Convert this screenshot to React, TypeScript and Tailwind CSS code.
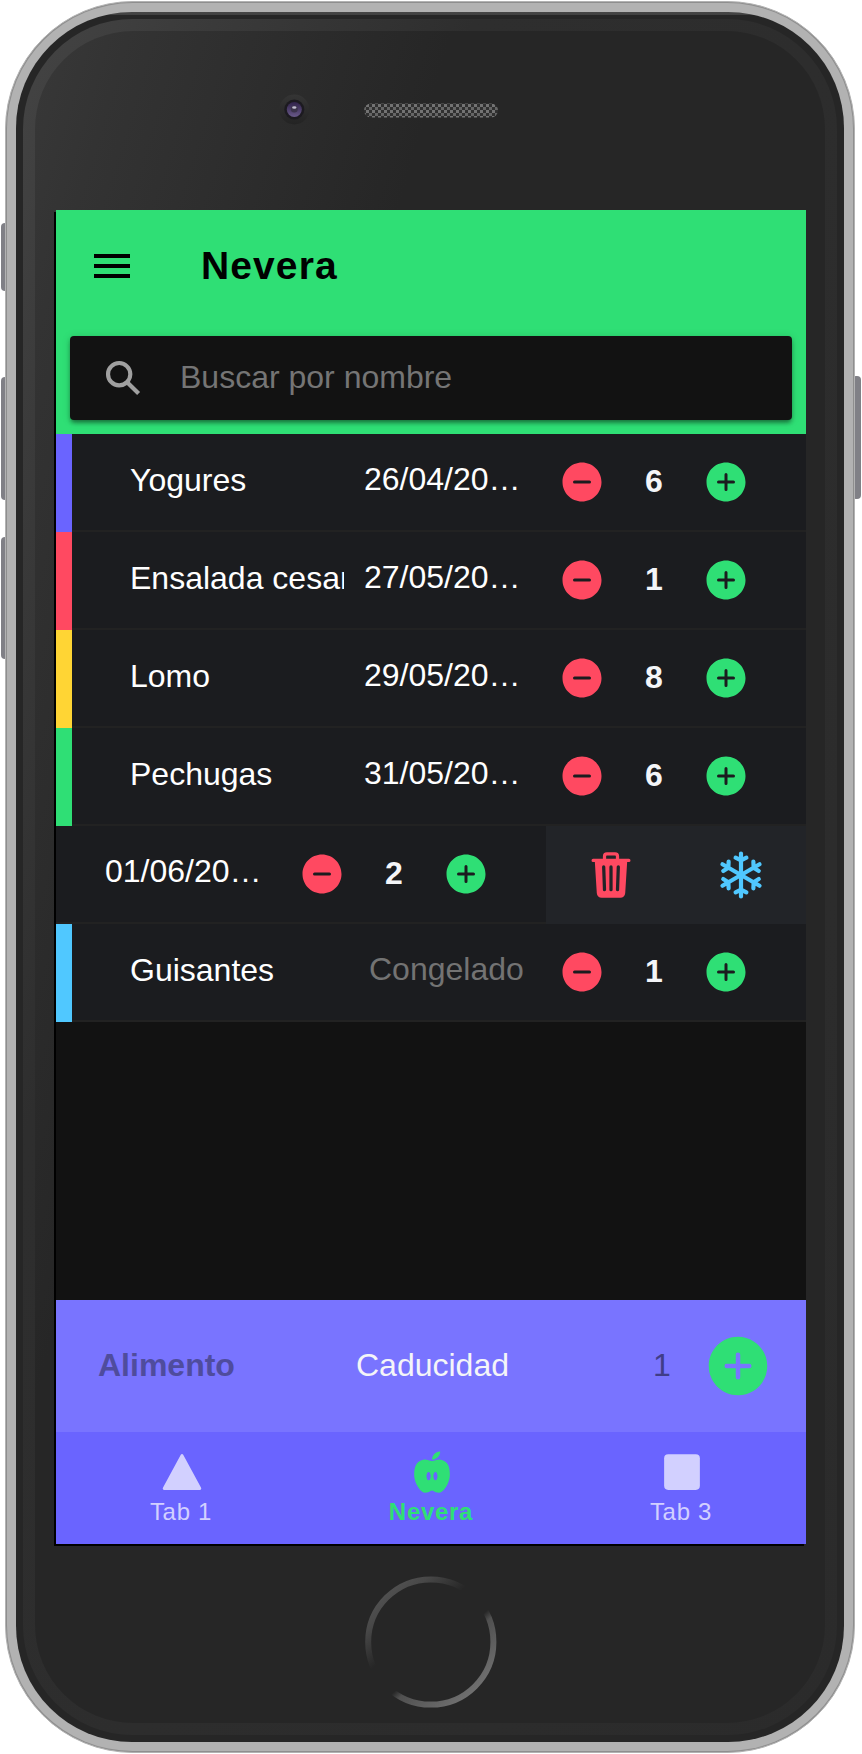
import React from "react";
import { MdMenu } from "react-icons/md";
import {
  IoAddCircle,
  IoNutrition,
  IoRemoveCircle,
  IoSearchSharp,
  IoSquare,
  IoTrash,
  IoTriangle,
} from "react-icons/io5";

type Food = { name: string; date: string; count: number; bar: string; frozen?: boolean; open?: boolean };

const foods: Food[] = [
  { name: "Yogures", date: "26/04/20…", count: 6, bar: "bg-[#6a64ff]" },
  { name: "Ensalada cesar", date: "27/05/20…", count: 1, bar: "bg-[#ff4961]" },
  { name: "Lomo", date: "29/05/20…", count: 8, bar: "bg-[#ffd534]" },
  { name: "Pechugas", date: "31/05/20…", count: 6, bar: "bg-[#2fdf75]" },
  { name: "", date: "01/06/20…", count: 2, bar: "", open: true },
  { name: "Guisantes", date: "Congelado", count: 1, bar: "bg-[#50c8ff]", frozen: true },
];

const spokes = [0, 60, 120, 180, 240, 300];

function Snowflake() {
  return (
    <svg
      className="size-[52px] text-[#50c8ff]"
      viewBox="-26 -26 52 52"
      fill="none"
      stroke="currentColor"
      strokeWidth="4.2"
      strokeLinecap="round"
      strokeLinejoin="round"
    >
      {spokes.map((a) => (
        <path key={a} transform={`rotate(${a})`} d="M0 0V-21.4M-5.4 -17.4L0 -14.6L5.4 -17.4" />
      ))}
    </svg>
  );
}

function Counter({ count }: { count: number }) {
  return (
    <div className="flex h-[96px] w-[192px] shrink-0 items-center justify-between">
      <IoRemoveCircle className="size-[48px] text-[#ff4961]" />
      <span className="pb-[2px] text-[32px] font-bold text-[#f4f5f8]">{count}</span>
      <IoAddCircle className="size-[48px] text-[#2fdf75]" />
    </div>
  );
}

function Row({ food }: { food: Food }) {
  if (food.open) {
    return (
      <li className="flex h-[98px] bg-[#222428]">
        <div className="flex w-[490px] border-b-2 border-[#222222] bg-[#1b1c1f] pl-[49px]">
          <span className="w-[193px] pt-[26px] text-[32px] leading-[38px]">{food.date}</span>
          <Counter count={food.count} />
        </div>
        <div className="flex flex-1 items-center">
          <span className="flex w-[130px] justify-center">
            <IoTrash className="size-[52px] text-[#ff4961]" />
          </span>
          <span className="flex w-[130px] justify-center">
            <Snowflake />
          </span>
        </div>
      </li>
    );
  }
  return (
    <li className="flex h-[98px] bg-[#1b1c1f]">
      <span className={`w-[16px] ${food.bar}`} />
      <div className="flex flex-1 border-b-2 border-[#222222] pl-[58px]">
        <span className="mr-[20px] w-[214px] overflow-hidden pt-[27px] text-[32px] leading-[38px] whitespace-nowrap">
          {food.name}
        </span>
        <span
          className={`w-[194px] pt-[26px] text-[32px] leading-[38px] ${food.frozen ? "pl-[5px] text-[#737373]" : ""}`}
        >
          {food.date}
        </span>
        <Counter count={food.count} />
      </div>
    </li>
  );
}

function Phone({ children }: { children: React.ReactNode }) {
  return (
    <div className="relative h-[1754px] w-[862px] overflow-hidden bg-white font-['Liberation_Sans',Arial,sans-serif]">
      <i className="absolute top-[223px] left-px h-[68px] w-[8px] rounded-[4px] bg-[#808086]" />
      <i className="absolute top-[377px] left-px h-[123px] w-[8px] rounded-[4px] bg-[#808086]" />
      <i className="absolute top-[537px] left-px h-[122px] w-[8px] rounded-[4px] bg-[#808086]" />
      <i className="absolute top-[376px] left-[852px] h-[123px] w-[9px] rounded-[4px] bg-[#808086]" />
      <div className="relative ml-[5px] h-[1754px] w-[850px] pt-px">
        <div className="h-[1752px] rounded-[128px] border border-[#b2b2b2] bg-[#8e8e8e] p-px">
          <div className="h-full rounded-[126px] bg-[#b2b2b2] px-[9px] pt-[9px] pb-[9px]">
            <div className="h-full rounded-[116px] bg-[linear-gradient(to_bottom,#474747_0px,#404040_3px,#262626_3px)] px-[7px] pt-[7px] pb-[7px]">
              <div className="h-full rounded-[110px] bg-[linear-gradient(112deg,#444444_0%,#3c3c3c_10%,#2e2e2e_30%,#2b2b2b_100%)] p-[12px]">
                <div className="h-full rounded-[98px] bg-[linear-gradient(107deg,#383838_0px,#333333_90px,#262626_400px)] pt-[179px] pl-[21px]">
                  {children}
                </div>
              </div>
            </div>
          </div>
        </div>
      </div>
      <svg className="absolute top-[90px] left-[270px]" width="240" height="40" viewBox="270 90 240 40">
        <defs>
          <pattern id="mesh" x="366" y="104" width="6" height="6" patternUnits="userSpaceOnUse">
            <rect width="6" height="6" fill="#303030" />
            <rect width="3" height="3" fill="#737373" />
            <rect x="3" y="3" width="3" height="3" fill="#666666" />
          </pattern>
          <linearGradient id="ring" x1="0" y1="0" x2="0" y2="1">
            <stop stopColor="#353535" />
            <stop offset="1" stopColor="#232323" />
          </linearGradient>
          <linearGradient id="lens" x1="0" y1="0" x2="0" y2="1">
            <stop stopColor="#30224a" />
            <stop offset="1" stopColor="#695989" />
          </linearGradient>
        </defs>
        <circle cx="294.3" cy="109.5" r="15" fill="url(#ring)" />
        <circle cx="294.3" cy="109.5" r="10" fill="#1c1a20" />
        <circle cx="294.3" cy="109.5" r="7.5" fill="url(#lens)" />
        <circle cx="294.3" cy="109" r="3.5" fill="#3c344c" />
        <ellipse cx="294.3" cy="107.5" rx="2.2" ry="1.3" fill="#c2bdd0" />
        <rect x="364" y="103.5" width="134" height="14" rx="7" fill="url(#mesh)" />
      </svg>
      <svg className="absolute top-[1574px] left-[363px]" width="136" height="136" viewBox="0 0 136 136">
        <defs>
          <linearGradient id="home" x1="0.15" y1="0.1" x2="0.85" y2="0.9">
            <stop stopColor="#505050" />
            <stop offset="0.12" stopColor="#484848" />
            <stop offset="0.36" stopColor="#262626" />
            <stop offset="0.6" stopColor="#262626" />
            <stop offset="0.66" stopColor="#505050" />
            <stop offset="1" stopColor="#707070" />
          </linearGradient>
        </defs>
        <circle cx="67.8" cy="68" r="62.6" fill="none" stroke="url(#home)" strokeWidth="6" />
      </svg>
    </div>
  );
}

export default function App() {
  return (
    <Phone>
      <div className="flex h-[1334px] w-[750px] flex-col bg-[#121212] text-white shadow-[-2px_2px_0_#000]">
        <header className="h-[224px] bg-[#2fdf75] px-[14px]">
          <div className="flex h-[126px] items-center pb-[14px] pl-[18px] text-black">
            <MdMenu className="size-[48px]" />
            <h1 className="ml-[65px] text-[39px] leading-[48px] font-bold tracking-[1.1px]">Nevera</h1>
          </div>
          <div className="flex h-[84px] items-center rounded-[4px] bg-[#121212] pl-[32px] shadow-[0_4px_4px_-2px_rgba(0,0,0,0.3),0_3px_4px_rgba(0,0,0,0.2),0_1px_8px_rgba(0,0,0,0.15)]">
            <IoSearchSharp className="size-[42px] text-[#a0a0a0]" />
            <span className="ml-[36px] pb-[2px] text-[32px] leading-[38px] text-[#757575]">Buscar por nombre</span>
          </div>
        </header>
        <ul className="shadow-[inset_0_6px_8px_-4px_rgba(0,0,0,0.3)]">
          {foods.map((f) => (
            <Row key={f.date} food={f} />
          ))}
        </ul>
        <div className="mt-auto flex h-[132px] items-center bg-[#7974ff] text-[32px]">
          <span className="w-[258px] pb-[2px] pl-[42px] font-bold text-[#4f4c9d]">Alimento</span>
          <span className="w-[240px] pb-[2px] pl-[42px] text-[#f4f5f8]">Caducidad</span>
          <span className="w-[148px] pb-[2px] pl-[99px] text-[#403d88]">1</span>
          <IoAddCircle className="size-[72px] text-[#2fdf75]" />
        </div>
        <nav className="grid h-[112px] grid-cols-3 bg-[#6a64ff] text-[24px] leading-[28px] tracking-[0.7px] text-[#d2d0ff]">
          <div className="flex flex-col items-center pt-[18px]">
            <IoTriangle className="ml-[2px] size-[44px]" />
            <span className="mt-[4px]">Tab 1</span>
          </div>
          <div className="flex flex-col items-center pt-[18px] text-[#2fdf75]">
            <IoNutrition className="ml-[2px] size-[44px]" />
            <span className="mt-[4px] font-bold">Nevera</span>
          </div>
          <div className="flex flex-col items-center pt-[18px]">
            <IoSquare className="ml-[2px] size-[44px]" />
            <span className="mt-[4px]">Tab 3</span>
          </div>
        </nav>
      </div>
    </Phone>
  );
}
